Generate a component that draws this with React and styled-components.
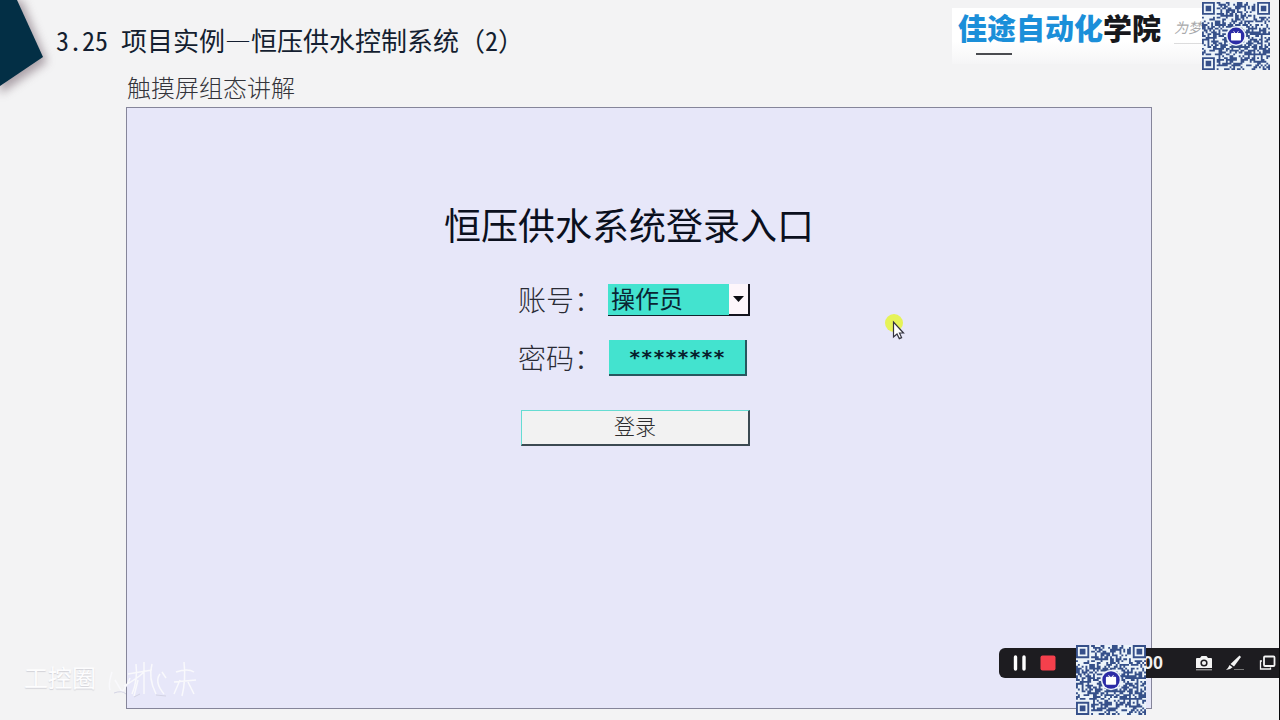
import React from "react";
import styled, { createGlobalStyle } from "styled-components";

const CJK = '"Liberation Sans", "Noto Sans CJK SC", sans-serif';
const HAN = '"Noto Sans CJK SC", "Liberation Sans", sans-serif';

const GlobalStyle = createGlobalStyle`
  * { box-sizing: border-box; }
  body { margin: 0; background: #f3f3f4; font-family: ${CJK}; color: #101828; }
`;

const Page = styled.div`
  position: relative;
  min-height: 100vh;
  display: flex;
  flex-direction: column;
  overflow: hidden;
  border-right: 1px solid #08080a;
`;

const Corner = styled.svg`
  position: absolute;
  left: 0;
  top: 0;
`;

const Header = styled.header`
  display: flex;
  justify-content: space-between;
  align-items: flex-start;
  height: 72px;
  padding-left: 56px;
`;

const Title = styled.h1`
  position: relative;
  margin: 22px 0 0;
  font: 400 26px/36px ${HAN};
  color: #141e30;
  white-space: nowrap;
`;

const Digits = styled.span`
  font-feature-settings: "hwid";
`;

const Dash = styled.span`
  font-feature-settings: "fwid";
`;

const Brand = styled.div`
  display: flex;
  align-items: flex-start;
  padding-right: 9px;
`;

const BrandCard = styled.div`
  width: 250px;
  height: 56px;
  margin-top: 8px;
  padding-left: 6px;
  display: flex;
  background: linear-gradient(#ffffff 60%, #f5f5f6);
`;

const LogoBlock = styled.div`
  width: 206px;
`;

const Logo = styled.div`
  font: 900 29px/45px ${CJK};
  color: #1b8fd9;
  white-space: nowrap;
`;

const LogoDark = styled.span`
  color: #17181c;
`;

const LogoRule = styled.div`
  width: 36px;
  height: 2px;
  margin-left: 18px;
  background: #4a4c50;
`;

const Motto = styled.div`
  flex: 1;
  height: 36px;
  margin-left: 10px;
  overflow: hidden;
  border-bottom: 1px solid #dcdcdd;
  font: italic 400 14px/40px ${CJK};
  color: #a9aaac;
  white-space: nowrap;
`;

const CodeBox = styled.div`
  width: ${(p) => p.$size}px;
  height: ${(p) => p.$size}px;
  margin-top: ${(p) => p.$top || 0}px;
  flex: none;
  background: #edf4fa;

  svg { display: block; width: 100%; height: 100%; }
`;

const Subtitle = styled.h2`
  margin: 0 127px;
  font: 300 24px/34px ${CJK};
  height: 35px;
  color: #33343a;
`;

const Panel = styled.main`
  flex: 1;
  display: flex;
  flex-direction: column;
  align-items: center;
  margin: 0 127px 11px 126px;
  padding: 92px 20px 40px 0;
  border: 1px solid #85859a;
  background: #e7e7f9;
`;

const PanelTitle = styled.h2`
  margin: 0 0 26px;
  font: 400 37px/56px ${CJK};
  color: #0b101e;
`;

const Form = styled.form`
  display: flex;
  flex-direction: column;
  width: 232px;
  margin-left: 10px;
`;

const Field = styled.div`
  display: flex;
  align-items: center;
  height: 36px;
  margin-bottom: ${(p) => p.$gap}px;
`;

const Label = styled.label`
  width: 90px;
  padding-top: 4px;
  font: 300 28px/36px ${CJK};
  color: #2a2b35;
  white-space: nowrap;
`;

const SelectWrap = styled.div`
  position: relative;
  width: 142px;
  height: 32px;
`;

const Select = styled.select`
  appearance: none;
  width: 100%;
  height: 100%;
  padding: 0 24px 0 3px;
  border: 0;
  border-bottom: 1px solid #11252f;
  border-radius: 0;
  background: #43e3cf;
  font: 400 24px/30px ${CJK};
  color: #0a2533;
`;

const Arrow = styled.span`
  position: absolute;
  right: 0;
  top: 0;
  bottom: 0;
  width: 21px;
  display: flex;
  align-items: center;
  justify-content: center;
  border: solid #14141e;
  border-width: 0 2px 2px 0;
  background: #fdf6fb;
  pointer-events: none;
`;

const Password = styled.input`
  width: 138px;
  height: 36px;
  margin-left: 1px;
  padding: 0;
  border: solid #27585f;
  border-width: 0 2px 2px 0;
  border-radius: 0;
  background: #43e3cf;
  font: 700 20px/28px "DejaVu Sans Mono", monospace;
  text-align: center;
  color: #07202b;
`;

const Submit = styled.button`
  height: 36px;
  margin-left: 3px;
  padding: 0 0 1px;
  border: 1px solid #66dcd2;
  border-right: 2px solid #3c4a52;
  border-bottom: 2px solid #3c4a52;
  background: #f2f2f2;
  font: 300 21px/30px ${CJK};
  color: #2c2c2e;
`;

const Pointer = styled.svg`
  position: absolute;
  left: 882px;
  top: 310px;
`;

const Watermark = styled.div`
  position: absolute;
  left: 24px;
  bottom: 12px;
  display: flex;
  align-items: flex-start;
  gap: 10px;
  font: 400 24px/38px ${CJK};
  color: #fdfdfe;
  text-shadow: 0 1px 1px #d2d2d8;

  svg { display: block; }
`;

const Recorder = styled.div`
  position: absolute;
  right: 0;
  bottom: 5px;
  width: 280px;
  height: 70px;
  display: flex;
  align-items: flex-start;
`;

const RecorderBar = styled.div`
  position: absolute;
  left: 0;
  right: 0;
  top: 3px;
  height: 30px;
  padding: 0 0 0 12px;
  display: flex;
  align-items: center;
  border-radius: 6px 0 0 6px;
  background: #1d1c20;
`;

const IconButton = styled.button`
  display: flex;
  flex: none;
  align-items: center;
  justify-content: center;
  width: ${(p) => p.$w}px;
  height: 30px;
  padding: 0;
  border: 0;
  background: none;
`;

const Time = styled.span`
  flex: none;
  width: 96px;
  margin-right: 26px;
  font: 700 18px/30px ${CJK};
  text-align: right;
  color: #f1f1f1;
`;

const RecorderCode = styled.div`
  position: relative;
  margin-left: 77px;
`;

const N = 37;

function buildCode() {
  let seed = 20473;
  const next = () => {
    seed = (seed * 1103515245 + 12345) % 2147483648;
    return seed / 2147483648;
  };
  const corner = (x, y, ox, oy) => {
    const dx = x - ox;
    const dy = y - oy;
    if (dx < -1 || dy < -1 || dx > 7 || dy > 7) return null;
    const ring = Math.max(Math.abs(dx - 3), Math.abs(dy - 3));
    return ring === 3 || ring <= 1;
  };
  let d = "";
  for (let y = 0; y < N; y++) {
    for (let x = 0; x < N; x++) {
      let on = next() > 0.48;
      for (const [ox, oy] of [[0, 0], [N - 7, 0], [0, N - 7]]) {
        const c = corner(x, y, ox, oy);
        if (c !== null) on = c;
      }
      const ring = Math.max(Math.abs(x - 30), Math.abs(y - 30));
      if (ring <= 2) on = ring !== 1;
      if (on) d += `M${x} ${y}h1v1h-1z`;
    }
  }
  return d;
}

const CODE = buildCode();

function Code({ size, top }) {
  return (
    <CodeBox $size={size} $top={top}>
      <svg viewBox={`0 0 ${N} ${N}`} role="img" aria-label="QR">
        <path d={CODE} fill="#36508a" />
        <circle cx="18.5" cy="18.5" r="5.4" fill="#edf4fa" />
        <circle cx="18.5" cy="18.5" r="4.6" fill="#2b2ba6" />
        <rect x="15.8" y="16.8" width="5.4" height="4.2" rx="0.5" fill="#fff" />
        <path d="M17.2 15.9l0.6 1M19.8 15.9l-0.6 1" stroke="#fff" strokeWidth="0.5" />
      </svg>
    </CodeBox>
  );
}

export default function App() {
  return (
    <>
      <GlobalStyle />
      <Page>
        <Corner width="80" height="120" viewBox="0 0 80 120" aria-hidden="true">
          <defs>
            <filter id="soft" x="-50%" y="-50%" width="200%" height="200%">
              <feGaussianBlur stdDeviation="5" />
            </filter>
          </defs>
          <path d="M0 0H22L47 62L0 94Z" fill="#8d7f88" opacity="0.7" filter="url(#soft)" />
          <path d="M0 0H17L43 57L0 86Z" fill="#032f45" />
        </Corner>

        <Header>
          <Title>
            <Digits>3.25 </Digits>项目实例<Dash>—</Dash>恒压供水控制系统（<Digits>2</Digits>）
          </Title>
          <Brand>
            <BrandCard>
              <LogoBlock>
                <Logo>佳途自动化<LogoDark>学院</LogoDark></Logo>
                <LogoRule />
              </LogoBlock>
              <Motto>为梦</Motto>
            </BrandCard>
            <Code size={68} top={2} />
          </Brand>
        </Header>

        <Subtitle>触摸屏组态讲解</Subtitle>

        <Panel>
          <PanelTitle>恒压供水系统登录入口</PanelTitle>
          <Form onSubmit={(e) => e.preventDefault()}>
            <Field $gap={22}>
              <Label htmlFor="account">账号：</Label>
              <SelectWrap>
                <Select id="account" defaultValue="操作员">
                  <option>操作员</option>
                </Select>
                <Arrow>
                  <svg width="11" height="6" viewBox="0 0 11 6" aria-hidden="true">
                    <path d="M0 0H11L5.5 6Z" fill="#0c0c12" />
                  </svg>
                </Arrow>
              </SelectWrap>
            </Field>
            <Field $gap={34}>
              <Label htmlFor="password">密码：</Label>
              <Password id="password" defaultValue="********" />
            </Field>
            <Submit type="submit">登录</Submit>
          </Form>
        </Panel>

        <Pointer width="30" height="34" viewBox="0 0 30 34" aria-hidden="true">
          <circle cx="12" cy="13" r="9" fill="#e5f53c" opacity="0.85" />
          <path d="M11.5 12V27L15 24L17.3 28.6L19.6 27.6L17.5 23H21.5Z" fill="#fff" stroke="#33333f" strokeWidth="1.2" />
        </Pointer>

        <Watermark>
          <span>工控圈</span>
          <svg width="94" height="48" viewBox="0 0 94 48" fill="none" stroke="#f9f9fc" strokeWidth="1.5" aria-hidden="true">
            <path d="M6 12Q2 24 4 30M9 20L16 32Q22 24 24 18M18 26Q32 18 38 12M30 4Q32 20 26 34M38 2V34M22 14L46 10M32 20L28 36M46 4Q42 18 50 34M54 14Q48 22 58 34M56 12L60 18M70 12Q82 8 88 12M78 2Q80 20 76 36M68 22L90 20M74 20L68 34M82 22L88 34" />
            <path d="M8 33Q16 30 20 34M28 37L34 34M50 35L60 36" stroke="#d4d4e4" strokeWidth="1" />
          </svg>
        </Watermark>

        <Recorder>
          <RecorderBar>
            <IconButton $w={18} aria-label="暂停">
              <svg width="14" height="16" viewBox="0 0 14 16">
                <path d="M2.5 2V14M11 2V14" stroke="#fff" strokeWidth="3.4" strokeLinecap="round" />
              </svg>
            </IconButton>
            <IconButton $w={38} aria-label="停止">
              <svg width="16" height="16" viewBox="0 0 16 16">
                <rect x="0.5" y="0.5" width="15" height="15" rx="2" fill="#f5404c" />
              </svg>
            </IconButton>
            <Time>00:00</Time>
            <IconButton $w={30} aria-label="截图">
              <svg width="18" height="16" viewBox="0 0 18 16">
                <path d="M2 3H5L6.5 1H11.5L13 3H16Q17 3 17 4V13H1V4Q1 3 2 3Z" fill="#f4f4f4" />
                <circle cx="9" cy="8" r="3.6" fill="#1d1c20" />
                <circle cx="9" cy="8" r="2.1" fill="#f4f4f4" />
                <path d="M1 14.8H17" stroke="#bbb" strokeWidth="1" />
              </svg>
            </IconButton>
            <IconButton $w={32} aria-label="画笔">
              <svg width="20" height="16" viewBox="0 0 20 16">
                <path d="M14.5 0.5L16 2L9 11.5L5.5 9Z" fill="#f4f4f4" />
                <path d="M4.6 10L7.6 12.3Q5 15 1 15Q3 13.5 4.6 10Z" fill="#f4f4f4" />
                <path d="M9 14.5H19" stroke="#777" strokeWidth="1" />
              </svg>
            </IconButton>
            <IconButton $w={32} aria-label="窗口">
              <svg width="17" height="16" viewBox="0 0 17 16" fill="none" stroke="#f4f4f4">
                <rect x="5" y="1.5" width="10.5" height="9.5" rx="1" strokeWidth="1.8" />
                <path d="M3 6H1.5V14H11.5V12.5" strokeWidth="1.3" />
              </svg>
            </IconButton>
          </RecorderBar>
          <RecorderCode>
            <Code size={70} />
          </RecorderCode>
        </Recorder>
      </Page>
    </>
  );
}
